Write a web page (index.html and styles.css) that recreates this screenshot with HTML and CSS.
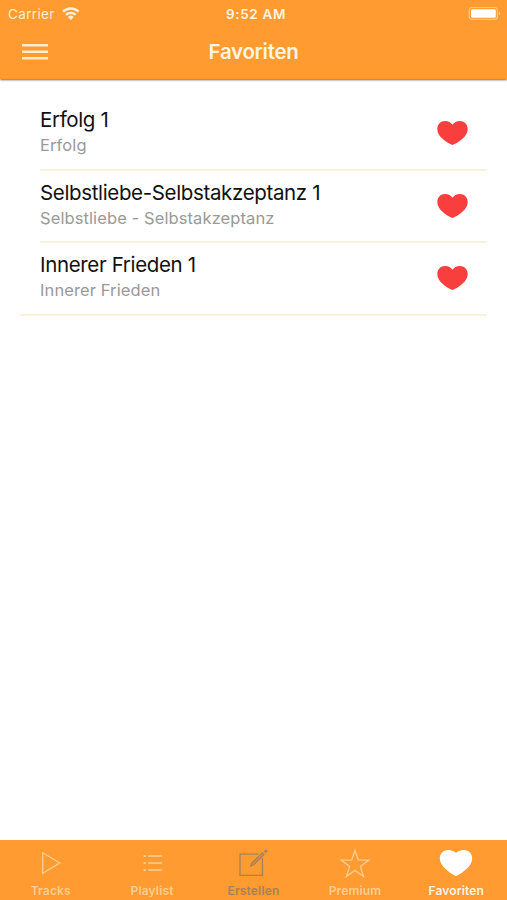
FILE: index.html
```
<!DOCTYPE html>
<html lang="de">

<head>
  <meta charset="UTF-8" />
  <meta name="viewport" content="width=device-width, initial-scale=1.0" />
  <title>Favoriten</title>
  <link rel="stylesheet" href="styles.css">
</head>

<body>
  <header class="header">
    <div class="status-bar">
      <div class="carrier">
        <span>Carrier</span>
        <svg width="18" height="14" viewBox="0 0 18 14" fill="none" stroke="#fff0d9" stroke-width="2.4">
          <path d="M1 4.6a11.2 11.2 0 0 1 15.6 0" />
          <path d="M3.9 7.9a7 7 0 0 1 9.8 0" />
          <path d="M8.8 12.9L5.9 10a4.2 4.2 0 0 1 5.8 0z" fill="#fff0d9" stroke="none" />
        </svg>
      </div>
      <span class="time">9:52 AM</span>
      <div class="battery">
        <svg width="33" height="14" viewBox="0 0 33 14">
          <rect x="1.2" y=".4" width="28.2" height="12" rx="3" fill="none" stroke="#ffc68c" stroke-width="1.2" />
          <rect x="3" y="2.2" width="24.8" height="8.6" rx="1.4" fill="#fff" />
          <path d="M30.8 4.4v4q1.4-.6 1.4-2t-1.4-2z" fill="#ffc68c" />
        </svg>
      </div>
    </div>
    <div class="nav-bar">
      <button class="menu-button" aria-label="Menü">
        <svg width="26" height="18" viewBox="0 0 26 18"><path d="M0 2.2h26M0 8.8h26M0 15.2h26" /></svg>
      </button>
      <h1>Favoriten</h1>
    </div>
  </header>

  <main>
    <ul class="favorites">
      <li>
        <div class="track">
          <h2>Erfolg 1</h2>
          <p>Erfolg</p>
        </div>
        <svg class="heart" viewBox="0 0 31 24"><path d="M15.5 24C10 21.8 .3 15.5 .3 8.2C.3 3.2 3.6 0 8.2 0C11.4 0 14 1.6 15.5 3.8C17 1.6 19.6 0 22.8 0C27.4 0 30.7 3.2 30.7 8.2C30.7 15.5 21 21.8 15.5 24z" /></svg>
      </li>
      <li>
        <div class="track">
          <h2>Selbstliebe-Selbstakzeptanz 1</h2>
          <p>Selbstliebe - Selbstakzeptanz</p>
        </div>
        <svg class="heart" viewBox="0 0 31 24"><path d="M15.5 24C10 21.8 .3 15.5 .3 8.2C.3 3.2 3.6 0 8.2 0C11.4 0 14 1.6 15.5 3.8C17 1.6 19.6 0 22.8 0C27.4 0 30.7 3.2 30.7 8.2C30.7 15.5 21 21.8 15.5 24z" /></svg>
      </li>
      <li>
        <div class="track">
          <h2>Innerer Frieden 1</h2>
          <p>Innerer Frieden</p>
        </div>
        <svg class="heart" viewBox="0 0 31 24"><path d="M15.5 24C10 21.8 .3 15.5 .3 8.2C.3 3.2 3.6 0 8.2 0C11.4 0 14 1.6 15.5 3.8C17 1.6 19.6 0 22.8 0C27.4 0 30.7 3.2 30.7 8.2C30.7 15.5 21 21.8 15.5 24z" /></svg>
      </li>
    </ul>
  </main>

  <nav class="tab-bar">
    <a class="tab">
      <svg width="36" height="32" viewBox="0 0 36 32"><path d="M9.7 6.8v20.6L26.8 17z" /></svg>
      <span>Tracks</span>
    </a>
    <a class="tab">
      <svg width="36" height="32" viewBox="0 0 36 32">
        <path d="M14.2 10h14M14.2 17h14M14.2 24h14" />
        <path d="M9.6 10h2.2M9.6 17h2.2M9.6 24h2.2" stroke-width="2" />
      </svg>
      <span>Playlist</span>
    </a>
    <a class="tab create">
      <svg width="36" height="32" viewBox="0 0 36 32">
        <path d="M23.5 8.2H5v21.2h22.4V12" />
        <path d="M15.8 19.8l.8-2.6L27.4 6.8l1.6 1.6L18.2 19z" fill="currentColor" fill-opacity=".4" />
        <path d="M29.8 4.2l2 2" stroke-width="2.8" />
      </svg>
      <span>Erstellen</span>
    </a>
    <a class="tab">
      <svg width="36" height="32" viewBox="0 0 36 32"><path d="M18 4.2l3.3 10h10.5l-8.5 6.3 3.3 10L18 24.4l-8.6 6.1 3.3-10-8.5-6.3h10.5z" /></svg>
      <span>Premium</span>
    </a>
    <a class="tab active">
      <svg width="36" height="32" viewBox="0 0 36 32"><path d="M18 30C12.5 27.6 1.8 20.5 1.8 12.5C1.8 7.5 5.3 4 10 4C13.5 4 16.6 5.4 18 7C19.4 5.4 22.5 4 26 4C30.7 4 34.2 7.5 34.2 12.5C34.2 20.5 23.5 27.6 18 30z" /></svg>
      <span>Favoriten</span>
    </a>
  </nav>
</body>

</html>
```
FILE: styles.css
```
* {
  box-sizing: border-box;
}

body {
  margin: 0;
  height: 100vh;
  display: flex;
  flex-direction: column;
  font-family: Inter, Roboto, sans-serif;
  background-color: #fff;
}

h1,
h2,
p,
ul {
  margin: 0;
  padding: 0;
}

.header {
  height: 79px;
  background-color: #ff9b30;
  color: #fff4e3;
  box-shadow: 0 1px 2px rgba(0, 0, 0, 0.6);
}

.status-bar {
  height: 27px;
  display: grid;
  grid-template-columns: 1fr auto 1fr;
  align-items: center;
  padding: 0 6px 0 8px;
  font-size: 13.5px;
}

.carrier {
  display: flex;
  align-items: center;
  gap: 7px;
  color: #ffebd0;
  letter-spacing: 0.35px;
}

.time {
  font-weight: 600;
  letter-spacing: 0.65px;
  padding-left: 3px;
}

.battery {
  display: flex;
  justify-content: flex-end;
}

.nav-bar {
  height: 50px;
  display: grid;
  grid-template-columns: 80px 1fr 80px;
  align-items: center;
}

.menu-button {
  width: 26px;
  margin-left: 22px;
  padding: 0;
  border: 0;
  background: none;
  display: flex;
}

.menu-button svg {
  stroke: #ffecd0;
  stroke-width: 2.4;
}

h1 {
  font-size: 20.5px;
  font-weight: 600;
  letter-spacing: -0.3px;
  text-align: center;
  padding-bottom: 2px;
}

main {
  flex: 1;
  padding: 19px 20px 0;
}

.favorites {
  list-style: none;
  border-bottom: 2px solid #fff0dc;
}

.favorites li {
  height: 72px;
  margin-left: 20px;
  padding-right: 19px;
  display: flex;
  justify-content: space-between;
  align-items: center;
  border-bottom: 2px solid #fff0dc;
}

.favorites li:first-child {
  height: 73px;
}

.favorites li:last-child {
  height: 71px;
  border-bottom: 0;
}

.track {
  white-space: nowrap;
  padding-bottom: 2px;
}

h2 {
  font-size: 20.5px;
  font-weight: 400;
  line-height: 26px;
  letter-spacing: -0.35px;
  color: #111;
}

.track p {
  font-size: 16.5px;
  line-height: 25px;
  letter-spacing: 0.1px;
  color: #999;
}

.heart {
  width: 31px;
  height: 24px;
  margin-bottom: 1px;
  fill: #f93e3e;
}

.tab-bar {
  height: 60px;
  display: grid;
  grid-template-columns: repeat(5, 1fr);
  background-color: #ff9b30;
}

.tab {
  display: flex;
  flex-direction: column;
  align-items: center;
  padding-top: 6px;
  color: #ffcd91;
  font-size: 12px;
  font-weight: 600;
  line-height: 14px;
  letter-spacing: 0.15px;
}

.tab svg {
  fill: none;
  stroke: currentColor;
  stroke-width: 1.3;
}

.tab span {
  margin-top: 6px;
}

.create {
  color: #a5825a;
}

.active {
  color: #fff4e3;
}

.active svg {
  fill: #fff;
  stroke: none;
}
```
